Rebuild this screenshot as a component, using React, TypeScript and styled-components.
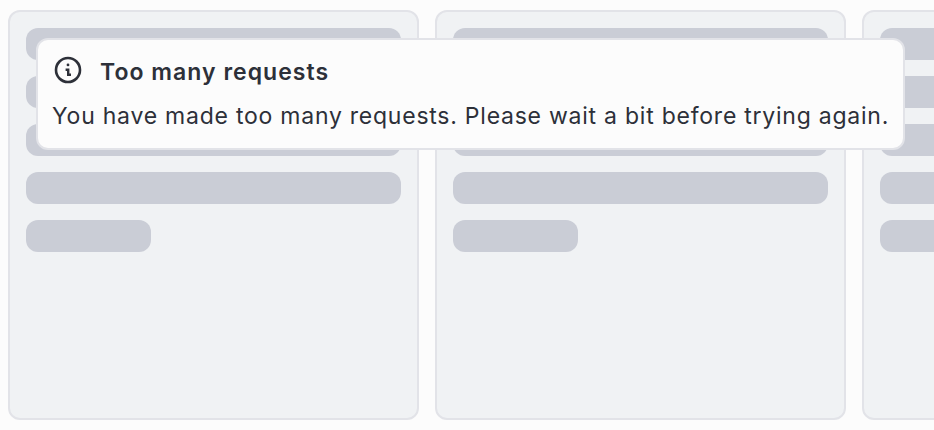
import React from "react";
import styled, { createGlobalStyle } from "styled-components";

const GlobalStyle = createGlobalStyle`
  * { box-sizing: border-box; }
  body {
    margin: 0;
    background: #fcfcfc;
    color: #2d3039;
    font-family: Inter, sans-serif;
    overflow: hidden;
  }
`;

const Board = styled.main`
  position: relative;
  display: flex;
  gap: 16px;
  width: 100%;
  height: 430px;
  padding: 10px 0 10px 8px;
  overflow: hidden;
`;

const Column = styled.section`
  display: flex;
  flex: 0 0 411px;
  flex-direction: column;
  gap: 16px;
  padding: 16px;
  border: 2px solid #e2e3e8;
  border-radius: 12px;
  background: #f0f2f4;
`;

const Placeholder = styled.div<{ $short?: boolean }>`
  width: ${({ $short }) => ($short ? "125px" : "100%")};
  height: 32px;
  border-radius: 12px;
  background: #cacdd6;
`;

const Toast = styled.div`
  position: absolute;
  top: 38px;
  left: 36px;
  display: flex;
  flex-direction: column;
  gap: 12px;
  width: 869px;
  height: 112px;
  padding: 14px;
  border: 2px solid #e2e3e8;
  border-radius: 12px;
  background: #fcfcfc;
`;

const ToastHeader = styled.header`
  display: flex;
  align-items: center;
  gap: 16px;
  height: 32px;
`;

const InfoIcon = styled.svg`
  display: block;
  flex: none;
  width: 32px;
  height: 32px;
`;

const Title = styled.h2`
  margin: 4px 0 0;
  font-size: 23px;
  font-weight: 600;
  line-height: 32px;
  letter-spacing: 1.03px;
  white-space: nowrap;
`;

const Message = styled.p`
  margin: 0;
  font-size: 23px;
  font-weight: 400;
  line-height: 36px;
  letter-spacing: 0.76px;
  white-space: nowrap;
`;

const columns = [0, 1, 2];

export default function App() {
  return (
    <>
      <GlobalStyle />
      <Board>
        {columns.map((column) => (
          <Column key={column}>
            <Placeholder />
            <Placeholder />
            <Placeholder />
            <Placeholder />
            <Placeholder $short />
          </Column>
        ))}
        <Toast role="status">
          <ToastHeader>
            <InfoIcon viewBox="0 0 32 32" fill="none" stroke="#2d3039" aria-hidden="true">
              <circle cx="16" cy="16" r="12" strokeWidth="2.6" />
              <path d="M13.6 15.8h2.6v5h2.8" strokeWidth="2.4" />
              <circle cx="16" cy="10.9" r="1.4" fill="#2d3039" stroke="none" />
            </InfoIcon>
            <Title>Too many requests</Title>
          </ToastHeader>
          <Message>You have made too many requests. Please wait a bit before trying again.</Message>
        </Toast>
      </Board>
    </>
  );
}
